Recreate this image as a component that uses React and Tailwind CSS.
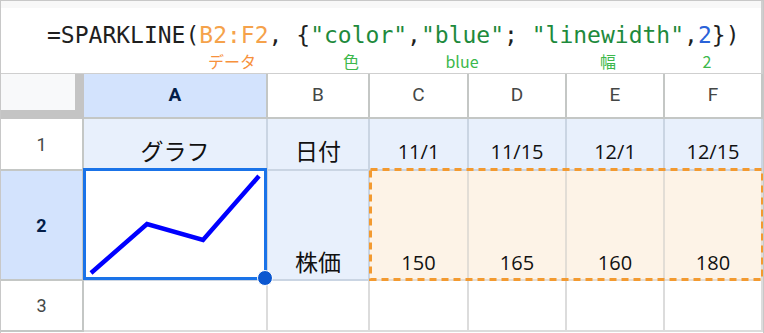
import React from 'react';

const mono = "font-['DejaVu_Sans_Mono','Liberation_Mono',monospace]";
const jp = "font-['Noto_Sans_CJK_JP','Noto_Sans',sans-serif]";
const roboto = "font-['Roboto','Liberation_Sans',sans-serif]";
const num = "font-['Open_Sans','Liberation_Sans',sans-serif]";

const FormulaBar = () => (
    <div className="h-[73px] border-b border-r-2 border-[#cfcfcf] bg-white">
        <div className="h-[7px] bg-[#f8f8f8]" />
        <div className={`${mono} pl-[46px] mt-[13px] text-[23px] leading-[28px] whitespace-pre text-[#1f1f1f]`}>
            <span>=SPARKLINE(</span>
            <span className="text-[#f5a24b]">B2:F2</span>
            <span>, {'{'}</span>
            <span className="text-[#1e8a3c]">"color"</span>
            <span>,</span>
            <span className="text-[#1e8a3c]">"blue"</span>
            <span>; </span>
            <span className="text-[#1e8a3c]">"linewidth"</span>
            <span>,</span>
            <span className="text-[#2a62d8]">2</span>
            <span>{'})'}</span>
        </div>
        {/* labels under the formula parts */}
        <div className={`${jp} flex mt-[2px] text-[16px] leading-[20px]`}>
            <span className="ml-[191px] w-[80px] text-center text-[#f7913c]">データ</span>
            <span className="ml-[39px] w-[80px] text-center text-[#3cb84c]">色</span>
            <span className="ml-[31px] w-[80px] text-center text-[#3cb84c]">blue</span>
            <span className="ml-[66px] w-[80px] text-center text-[#3cb84c]">幅</span>
            <span className="ml-[19px] w-[80px] text-center text-[#3cb84c]">2</span>
        </div>
    </div>
);

const RowHead = ({ children, active }) => (
    <div
        className={`${roboto} w-[83px] shrink-0 border-r-2 border-b-2 border-[#c4c7c5] flex items-center justify-center text-[18px] ${
            active ? 'bg-[#d3e3fd] font-bold text-[#041e49]' : 'bg-white text-[#444746]'
        }`}
    >
        {children}
    </div>
);

const ColHead = ({ w, children, active }) => (
    <div
        className={`${roboto} ${w} shrink-0 border-r-2 border-b-2 border-[#c4c7c5] flex items-center justify-center text-[19px] ${
            active ? 'bg-[#d3e3fd] font-bold text-[#041e49]' : 'bg-white text-[#444746]'
        }`}
    >
        {children}
    </div>
);

const BlueCell = ({ w, children, font, pb = 'pb-[5px]' }) => (
    <div className={`${w} ${font} ${pb} shrink-0 bg-[#e8f0fc] border-r-2 border-b-2 border-[#cad5e3] flex items-end justify-center text-[#111]`}>
        {children}
    </div>
);

const dates = [
    { w: 'w-[99px]', t: '11/1' },
    { w: 'w-[98px]', t: '11/15' },
    { w: 'w-[98px]', t: '12/1' },
    { w: 'w-[98px]', t: '12/15' },
];

const prices = ['150', '165', '160', '180'];

const Sparkline = () => (
    <svg width="182" height="108" className="block">
        <polyline
            points="7,102 63,53 119,69 175,5"
            fill="none"
            stroke="#0000ff"
            strokeWidth="4.5"
            strokeLinejoin="miter"
        />
    </svg>
);

export default function App() {
    return (
        <div className="w-[764px] h-[333px] bg-white border-t border-l border-r border-[#c8c8c8] overflow-hidden">
            <FormulaBar />

            {/* column headers */}
            <div className="flex h-[45px]">
                <div className="w-[83px] shrink-0 bg-[#f8f9fa] border-r-[9px] border-b-[9px] border-[#c4c4c4]" />
                <ColHead w="w-[184px]" active>A</ColHead>
                <ColHead w="w-[102px]">B</ColHead>
                <ColHead w="w-[99px]">C</ColHead>
                <ColHead w="w-[98px]">D</ColHead>
                <ColHead w="w-[98px]">E</ColHead>
                <ColHead w="w-[98px]">F</ColHead>
            </div>

            {/* row 1 */}
            <div className="flex h-[52px]">
                <RowHead>1</RowHead>
                <BlueCell w="w-[184px]" font={`${jp} text-[23px] leading-[28px]`}>グラフ</BlueCell>
                <BlueCell w="w-[102px]" font={`${jp} text-[23px] leading-[28px]`}>日付</BlueCell>
                {dates.map((d) => (
                    <BlueCell key={d.t} w={d.w} font={`${num} text-[20px] leading-[24px]`}>
                        {d.t}
                    </BlueCell>
                ))}
            </div>

            {/* row 2 */}
            <div className="flex h-[110px]">
                <RowHead active>2</RowHead>
                <div className="relative z-10 w-[184px] shrink-0 bg-white border-r-2 border-b-2 border-[#cad5e3]">
                    <Sparkline />
                    <div className="absolute -left-[1px] -top-[3px] -right-[1px] -bottom-[1px] border-[3px] border-[#1a73e8] pointer-events-none" />
                    <div className="absolute -right-[7px] -bottom-[7px] w-[16px] h-[16px] rounded-full bg-[#0b57d0] border border-white" />
                </div>
                <BlueCell w="w-[102px]" font={`${jp} text-[23px] leading-[28px]`} pb="pb-[4px]">株価</BlueCell>
                <div className="relative flex">
                    {dates.map((d, i) => (
                        <div
                            key={d.t}
                            className={`${d.w} ${num} shrink-0 bg-[#fdf3e7] border-r-2 border-b-2 border-[#e2ddd6] flex items-end justify-center pb-[4px] text-[20px] leading-[24px] text-[#111]`}
                        >
                            {prices[i]}
                        </div>
                    ))}
                    <svg width="395" height="113" className="absolute -left-[1px] -top-[3px] pointer-events-none">
                        <rect
                            x="1.5"
                            y="1.5"
                            width="392"
                            height="110"
                            fill="none"
                            stroke="#f39a30"
                            strokeWidth="3"
                            strokeDasharray="7 5"
                        />
                    </svg>
                </div>
            </div>

            {/* row 3 */}
            <div className="flex h-[51px]">
                <RowHead>3</RowHead>
                <div className="w-[184px] shrink-0 border-r-2 border-b-2 border-[#dcdcdc]" />
                <div className="w-[102px] shrink-0 border-r-2 border-b-2 border-[#dcdcdc]" />
                <div className="w-[99px] shrink-0 border-r-2 border-b-2 border-[#dcdcdc]" />
                <div className="w-[98px] shrink-0 border-r-2 border-b-2 border-[#dcdcdc]" />
                <div className="w-[98px] shrink-0 border-r-2 border-b-2 border-[#dcdcdc]" />
                <div className="w-[98px] shrink-0 border-r-2 border-b-2 border-[#dcdcdc]" />
            </div>
        </div>
    );
}
